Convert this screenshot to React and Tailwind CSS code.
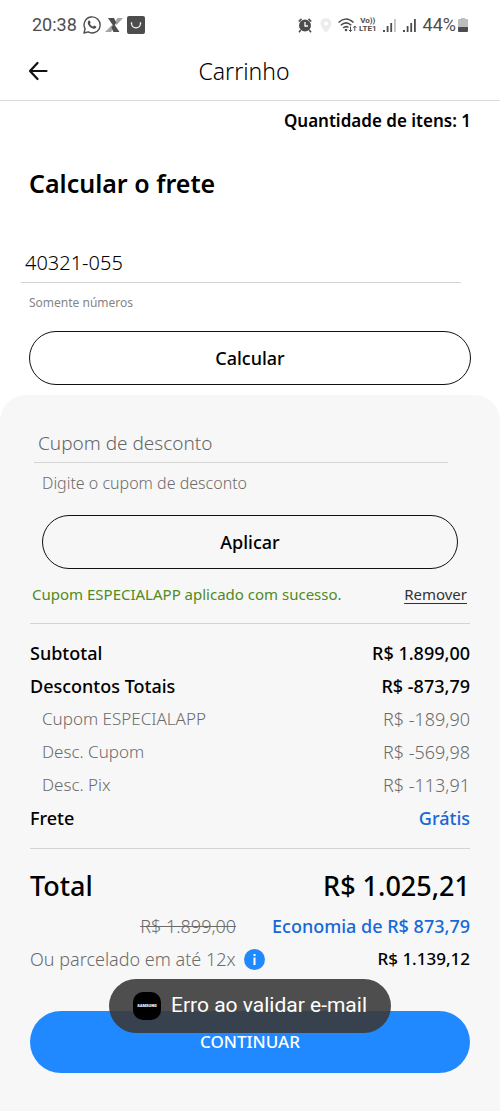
const discounts = [
  { label: "Cupom ESPECIALAPP", value: "R$ -189,90" },
  { label: "Desc. Cupom", value: "R$ -569,98" },
  { label: "Desc. Pix", value: "R$ -113,91" },
];

function Signal({ faded }) {
  return (
    <svg className="h-5 w-3.5" viewBox="0 0 14 20" fill="currentColor" aria-hidden="true">
      <rect x="0" y="15" width="2" height="2" />
      <rect x="3.700" y="11" width="1.800" height="6" />
      <rect x="7.300" y="8" width="1.800" height="9" />
      <rect x="11" y="4" width="1.800" height="13" opacity={faded ? 0.35 : 1} />
    </svg>
  );
}

function StatusBar() {
  return (
    <div className="flex h-[50px] items-center justify-between pl-8 pr-8 font-[Roboto,sans-serif] text-lg text-[#4d4d4d]">
      <div className="flex items-center gap-1">
        <span className="mr-0.5">20:38</span>
        <svg className="h-[18px] w-[18px]" viewBox="0 0 18 18" fill="none" stroke="currentColor" aria-hidden="true">
          <path d="M1 17 2.1 12.8A8 8 0 1 1 5.2 15.9Z" strokeWidth="1.400" strokeLinejoin="round" />
          <path d="M5.5 4.8c.5-.6 1.2-.5 1.5.1l.6 1.5c.1.4-.6 1-.7 1.3.7 1.4 1.7 2.3 3.1 2.9.4 0 .9-1 1.3-1l1.7.8c.5.3.3 1-.1 1.5-.9 1-2.5 1.1-4.3.2-1.7-.9-3-2.2-3.6-4-.4-1.300-.2-2.500.5-3.300Z" fill="currentColor" stroke="none" />
        </svg>
        <svg className="h-[14px] w-[18px]" viewBox="0 0 18 14" aria-hidden="true">
          <path d="M12.500 0H18L11.500 7 9.500 5Z" fill="#a5a5a5" />
          <path d="M0 14 7 7l2 3-3 4Z" fill="#a5a5a5" />
          <path d="M3 0h6l2.200 4.500L9.800 7l4.700 7H8.400L6.500 9.500l1.300-2.200Z" fill="#4d4d4d" />
        </svg>
        <svg className="h-[18px] w-[18px]" viewBox="0 0 18 18" fill="none" aria-hidden="true">
          <rect width="18" height="18" rx="2" fill="#4d4d4d" />
          <path d="M4.500 7.300a4.500 4.500 0 0 0 9 0" stroke="#fff" strokeWidth="1.200" strokeLinecap="round" />
          <circle cx="4.500" cy="7" r=".8" fill="#fff" />
          <circle cx="13.500" cy="7" r=".8" fill="#fff" />
        </svg>
      </div>
      <div className="flex items-center gap-1.5">
        <svg className="mr-0.5 h-[15px] w-[14px]" viewBox="0 0 14 15" fill="none" stroke="currentColor" aria-hidden="true">
          <circle cx="7" cy="7.500" r="6" fill="currentColor" stroke="none" />
          <path d="M.7 3.500 3.500.9M13.300 3.500 10.500.9M2.800 12 1 14.200M11.200 12l1.800 2.200" strokeWidth="1.600" />
          <path d="M7 4v4h3" stroke="#fff" strokeWidth="1.300" />
        </svg>
        <svg className="h-[15px] w-3" viewBox="0 0 12 15" aria-hidden="true">
          <path d="M6 0a5.500 5.500 0 0 0-5.500 5.500C.5 9.500 6 14.500 6 14.500s5.500-5 5.500-9A5.500 5.500 0 0 0 6 0Z" fill="#ececec" />
          <circle cx="6" cy="5.500" r="2" fill="#fff" />
        </svg>
        <svg className="h-4 w-[19px]" viewBox="0 0 19 16" fill="none" stroke="currentColor" strokeWidth="1.500" aria-hidden="true">
          <path d="M.5 5.500Q8 -1.500 15.500 5.500M2.800 8.300Q8 3.500 13.300 8.300M5.200 11Q8 8.500 10.500 10.500" />
          <circle cx="8" cy="13" r="1.300" fill="currentColor" stroke="none" />
          <path d="M12.500 9.500v5m-1.700-1.700 1.700 1.700 1.500-1.700M16.800 14V9m-1.500 1.700L16.800 9l1.500 1.700" strokeWidth="1" />
        </svg>
        <div className="-ml-1 flex flex-col items-center text-[8px] font-bold leading-[8px]">
          <span>Vo))</span>
          <span>LTE1</span>
        </div>
        <Signal faded />
        <Signal />
        <span className="flex items-center gap-0.5">
          44%
          <svg className="h-4 w-2.5" viewBox="0 0 10 16" aria-hidden="true">
            <path d="M3 1h4v1h2q1 0 1 1v7H0V3q0-1 1-1h2Z" fill="#bdbdbd" />
            <path d="M0 10h10v4q0 1-1 1H1q-1 0-1-1Z" fill="#4d4d4d" />
          </svg>
        </span>
      </div>
    </div>
  );
}

function Header() {
  return (
    <header className="grid h-[51px] grid-cols-[1fr_auto_1fr] items-center border-b border-[#dcdcdc] pb-2 pl-7 pr-10">
      <button type="button" aria-label="Voltar" className="flex h-7 w-7 items-center">
        <svg className="h-5 w-5" viewBox="0 0 20 20" fill="none" stroke="#111" strokeWidth="2.200" strokeLinecap="round" strokeLinejoin="round" aria-hidden="true">
          <path d="M18.500 10H2M9.500 2 2 10l7.500 8" />
        </svg>
      </button>
      <h1 className="text-[23px] font-light">Carrinho</h1>
    </header>
  );
}

function Row({ label, value, valueClass = "" }) {
  return (
    <div className="flex h-[33px] items-center justify-between text-lg font-medium">
      <dt>{label}</dt>
      <dd className={valueClass}>{value}</dd>
    </div>
  );
}

function Toast() {
  return (
    <div role="status" className="absolute left-1/2 top-[-32px] flex h-[54px] -translate-x-1/2 items-center gap-2.5 whitespace-nowrap rounded-full bg-[#3b3b3b]/90 px-6 font-[Roboto,sans-serif] text-[21px] text-white">
      <span className="flex h-7 w-7 items-center justify-center rounded-[10px] bg-black text-[4px] font-black">SAMSUNG</span>
      Erro ao validar e-mail
    </div>
  );
}

export default function App() {
  return (
    <div className="flex min-h-screen flex-col bg-white font-['Noto_Sans',sans-serif] text-black">
      <StatusBar />
      <Header />
      <main className="flex grow flex-col">
        <section className="flex flex-col px-[29px] pb-2.5">
          <p className="flex h-10 items-center justify-end text-[17px] font-semibold">Quantidade de itens: 1</p>
          <h2 className="mt-6 text-[25px] font-semibold leading-9">Calcular o frete</h2>
          <input
            id="cep"
            aria-label="CEP"
            inputMode="numeric"
            defaultValue="40321-055"
            className="-ml-2 mr-2.5 mt-10 h-[42px] border-b border-[#d4d4d4] px-1 pt-0.5 text-xl font-light outline-none"
          />
          <label htmlFor="cep" className="mt-2.5 text-xs leading-5 text-[#858585]">Somente números</label>
          <button type="button" className="mt-[18px] h-[54px] rounded-full border border-[#111] text-lg font-medium">Calcular</button>
        </section>

        <section className="flex grow flex-col rounded-t-[26px] bg-[#f7f7f7] px-[30px] pt-6">
          <div className="flex flex-col px-3">
            <input
              id="cupom"
              placeholder="Cupom de desconto"
              aria-label="Cupom de desconto"
              className="-ml-2 mr-2.5 h-11 border-b border-[#d4d4d4] bg-transparent px-1 pt-1 text-[19px] font-light outline-none placeholder:text-[#666]"
            />
            <label htmlFor="cupom" className="mt-2 text-base font-light leading-6 text-[#6b6b6b]">Digite o cupom de desconto</label>
            <button type="button" className="mt-5 h-[54px] rounded-full border border-[#111] text-lg font-medium">Aplicar</button>
          </div>
          <div className="flex h-[55px] items-center justify-between border-b border-[#d4d4d4] pb-1 pl-0.5 pr-[3px] text-[15px]">
            <span className="text-[#508a20]">Cupom ESPECIALAPP aplicado com sucesso.</span>
            <a href="#remover" className="text-[#333] underline underline-offset-3">Remover</a>
          </div>

          <dl className="border-b border-[#d4d4d4] pb-3.5 pt-3">
            <Row label="Subtotal" value="R$ 1.899,00" />
            <Row label="Descontos Totais" value="R$ -873,79" />
            {discounts.map((item) => (
              <div key={item.label} className="flex h-[33px] items-center justify-between pl-3 font-light text-[#6b6b6b]">
                <dt className="text-[17px]">{item.label}</dt>
                <dd className="text-lg">{item.value}</dd>
              </div>
            ))}
            <Row label="Frete" value="Grátis" valueClass="text-[#1668d8]" />
          </dl>

          <div className="mt-3.5 flex h-[46px] items-center justify-between text-[27px] font-medium">
            <span>Total</span>
            <span>R$ 1.025,21</span>
          </div>
          <div className="flex h-[33px] items-center justify-end gap-9 text-lg">
            <s className="font-light text-[#6b6b6b]">R$ 1.899,00</s>
            <span className="font-medium text-[#1668d8]">Economia de R$ 873,79</span>
          </div>
          <div className="flex h-[34px] items-center justify-between text-lg">
            <span className="flex items-center gap-2 font-light text-[#6b6b6b]">
              Ou parcelado em até 12x
              <button type="button" aria-label="Informações do parcelamento">
                <svg className="h-[21px] w-[21px]" viewBox="0 0 21 21" aria-hidden="true">
                  <circle cx="10.500" cy="10.500" r="10.500" fill="#2189ff" />
                  <path d="M9.500 5h2v2h-2ZM9.500 8.500h2V16h-2Z" fill="#fff" />
                </svg>
              </button>
            </span>
            <span className="text-[17px] font-medium">R$ 1.139,12</span>
          </div>
          <div className="relative mb-9 mt-[35px] flex flex-col">
            <button type="button" className="h-[62px] rounded-full bg-[#2189ff] text-[17px] font-medium text-white">CONTINUAR</button>
            <Toast />
          </div>
        </section>
      </main>
    </div>
  );
}
